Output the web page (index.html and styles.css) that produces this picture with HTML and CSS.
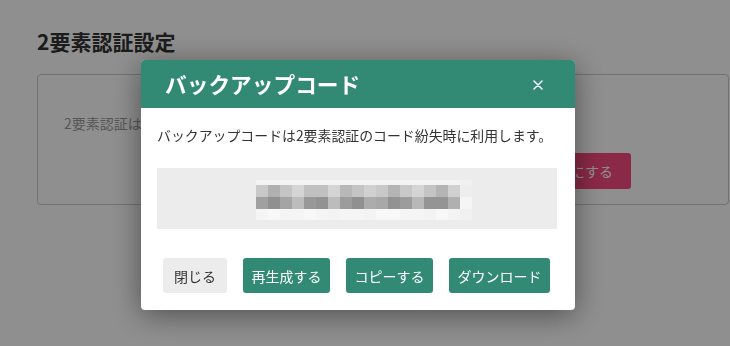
FILE: index.html
```html
<!DOCTYPE html>
<html lang="ja">
<head>
<meta charset="utf-8">
<title>2要素認証設定</title>
<link rel="stylesheet" href="styles.css">
</head>
<body>
<main class="page">
  <h1 class="page-title">2要素認証設定</h1>
  <section class="card">
    <p class="card-text">2要素認証は無効です</p>
    <div class="card-actions">
      <button class="btn btn-danger">有効にする</button>
    </div>
  </section>
</main>

<div class="overlay">
  <div class="modal">
    <header class="modal-header">
      <h2 class="modal-title">バックアップコード</h2>
      <button class="modal-close" aria-label="閉じる">
        <svg width="10" height="10" viewBox="0 0 10 10"><path d="M1 1L9 9M9 1L1 9" stroke="#fff" stroke-width="1.5" stroke-linecap="round"/></svg>
      </button>
    </header>
    <div class="modal-body">
      <p class="modal-text">バックアップコードは2要素認証のコード紛失時に利用します。</p>
      <div class="code-box">
        <div class="mosaic">
          <div class="mrow r0">
            <span class="gf3"></span><span class="gf3"></span><span class="gf3"></span><span class="gf3"></span><span class="gf3"></span><span class="gf3"></span><span class="gf3"></span><span class="gf3"></span><span class="gf3"></span><span class="gf3"></span><span class="gf3"></span><span class="gf3"></span><span class="gf3"></span><span class="gf3"></span><span class="gf3"></span><span class="gf3"></span><span class="gf3"></span><span class="gf0"></span>
          </div>
          <div class="mrow">
            <span class="gc8"></span><span class="gb0"></span><span class="gc4"></span><span class="gd4"></span><span class="gc0"></span><span class="gc0"></span><span class="gd4"></span><span class="gb8"></span><span class="gc4"></span><span class="gd0"></span><span class="gc8"></span><span class="gb4"></span><span class="gc8"></span><span class="gd4"></span><span class="gc4"></span><span class="gb4"></span><span class="gd0"></span><span class="gee"></span>
          </div>
          <div class="mrow">
            <span class="ga0"></span><span class="g90"></span><span class="ga4"></span><span class="gbc"></span><span class="g98"></span><span class="g92"></span><span class="gbc"></span><span class="g9c"></span><span class="g90"></span><span class="gac"></span><span class="ga8"></span><span class="g92"></span><span class="g9c"></span><span class="gb8"></span><span class="g94"></span><span class="g94"></span><span class="gb0"></span><span class="gf5"></span>
          </div>
          <div class="mrow r3">
            <span class="gf5"></span><span class="gf8"></span><span class="gf5"></span><span class="gf5"></span><span class="gf8"></span><span class="gf5"></span><span class="gf3"></span><span class="gf5"></span><span class="gf5"></span><span class="gf3"></span><span class="gf8"></span><span class="gf8"></span><span class="gf5"></span><span class="gf5"></span><span class="gf3"></span><span class="gf8"></span><span class="gf3"></span><span class="gf0"></span>
          </div>
        </div>
      </div>
    </div>
    <footer class="modal-footer">
      <button class="btn btn-light">閉じる</button>
      <button class="btn btn-primary">再生成する</button>
      <button class="btn btn-primary">コピーする</button>
      <button class="btn btn-primary">ダウンロード</button>
    </footer>
  </div>
</div>
</body>
</html>
```

FILE: styles.css
```css
* { box-sizing: border-box; }

html, body {
  margin: 0;
  padding: 0;
  width: 730px;
  height: 346px;
  overflow: hidden;
  background: #ffffff;
  font-family: "Noto Sans CJK JP", "Noto Sans", sans-serif;
  color: #333333;
}

.page {
  padding: 0 1px 0 37px;
}

.page-title {
  margin: 26px 0 18px;
  font-size: 21px;
  line-height: 30px;
  font-weight: 700;
  color: #333333;
}

.card {
  border: 1px solid #cccccc;
  border-radius: 4px;
  padding: 38px 97px 15px 26px;
}

.card-text {
  margin: 0;
  font-size: 14px;
  line-height: 20px;
  color: #9a9a9a;
}

.card-actions {
  display: flex;
  justify-content: flex-end;
  margin-top: 20px;
}

.btn {
  font-family: inherit;
  font-size: 14px;
  line-height: 20px;
  height: 35px;
  padding: 0 8.5px;
  border: none;
  border-radius: 3px;
  cursor: pointer;
  white-space: nowrap;
}

.btn-danger {
  height: 36px;
  padding: 0 18px;
  background: #f74a80;
  color: #ffffff;
}

.btn-primary {
  background: #328a74;
  color: #ffffff;
}

.btn-light {
  background: #ececec;
  color: #333333;
  padding: 0 11px;
}

.overlay {
  position: fixed;
  inset: 0;
  background: rgba(0, 0, 0, 0.44);
  padding: 60px 0 0 141px;
}

.modal {
  width: 434px;
  background: #ffffff;
  border-radius: 4px;
  overflow: hidden;
  box-shadow: 0 5px 30px rgba(0, 0, 0, 0.45);
}

.modal-header {
  height: 48px;
  background: #328a74;
  display: flex;
  align-items: center;
  justify-content: space-between;
  padding: 0 32px 0 24px;
}

.modal-title {
  margin: 0;
  font-size: 21.7px;
  line-height: 30px;
  font-weight: 700;
  color: #ffffff;
}

.modal-close {
  background: none;
  border: none;
  padding: 0;
  width: 10px;
  height: 10px;
  display: flex;
  margin-top: 1px;
}

.modal-body {
  padding: 17px 16px 0;
}

.modal-text {
  margin: 0 0 23px;
  font-size: 13.9px;
  line-height: 20px;
  color: #333333;
}

.code-box {
  width: 400px;
  height: 61px;
  background: #ececec;
  padding: 12px 0 0 99px;
}

.mosaic {
  display: flex;
  flex-direction: column;
}

.mrow {
  display: flex;
  height: 12px;
}

.mrow.r0 { height: 5px; }
.mrow.r3 { height: 11px; }

.mrow span {
  width: 12px;
  height: 100%;
}

.g90 { background: #909090; }
.g92 { background: #929292; }
.g94 { background: #949494; }
.g98 { background: #989898; }
.g9c { background: #9c9c9c; }
.ga0 { background: #a0a0a0; }
.ga4 { background: #a4a4a4; }
.ga8 { background: #a8a8a8; }
.gac { background: #acacac; }
.gb0 { background: #b0b0b0; }
.gb4 { background: #b4b4b4; }
.gb8 { background: #b8b8b8; }
.gbc { background: #bcbcbc; }
.gc0 { background: #c0c0c0; }
.gc4 { background: #c4c4c4; }
.gc8 { background: #c8c8c8; }
.gd0 { background: #d0d0d0; }
.gd4 { background: #d4d4d4; }
.gee { background: #eeeeee; }
.gf0 { background: #f0f0f0; }
.gf3 { background: #f3f3f3; }
.gf5 { background: #f5f5f5; }
.gf8 { background: #f8f8f8; }

.modal-footer {
  display: flex;
  gap: 16px;
  padding: 29px 0 17px 22px;
}
```
